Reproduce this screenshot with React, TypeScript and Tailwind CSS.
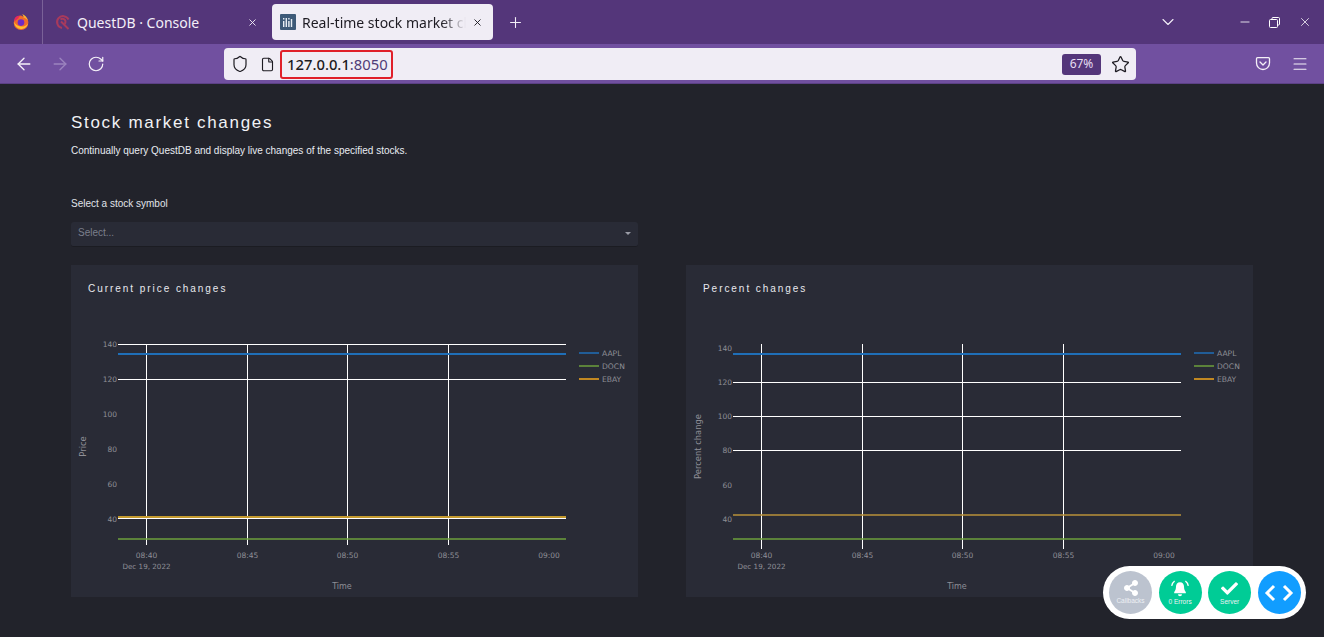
import React from 'react';
import { ArrowLeft, ArrowRight, ChevronDown, File, Menu, Minus, Plus, RotateCw, Shield, Star, X } from 'lucide-react';
import { FaCheck, FaShareAlt } from 'react-icons/fa';

interface ChartProps {
  title: string;
  yLabel: string;
  yTicks: { label: string; y: number; line?: boolean }[];
  vEnd: number;
  series: { color: string; y: number; width?: number }[];
  whiteLines?: number[];
}

const LEGEND = [
  { name: 'AAPL', color: '#1f6fb8', y: 88 },
  { name: 'DOCN', color: '#6da03c', y: 101 },
  { name: 'EBAY', color: '#f5a81c', y: 114 },
];

const XS = [75.5, 176.5, 276.5, 377.5];
const TIMES = ['08:40', '08:45', '08:50', '08:55'];
const TICK = '#8f8f96';

const Chart: React.FC<ChartProps> = ({ title, yLabel, yTicks, vEnd, series, whiteLines = [] }) => {
  return (
    <div className="bg-[#292b36] h-[332px] flex flex-col">
      <h3 className="pl-[17px] pt-[17px] text-[10px] leading-[13px] tracking-[1.95px] text-[#e8e9ee]">{title}</h3>
      <svg width="567" height="302" viewBox="0 30 567 302" className="block font-['DejaVu_Sans',sans-serif]">
        {yTicks.filter((t) => t.line).map((t) => (
          <line key={t.label} x1="47" x2="495" y1={t.y + 0.5} y2={t.y + 0.5} stroke="#fff" strokeWidth="1" />
        ))}
        {whiteLines.map((y) => (
          <line key={y} x1="47" x2="495" y1={y} y2={y} stroke="#fff" strokeWidth="1" />
        ))}
        {XS.map((x) => (
          <line key={x} x1={x} x2={x} y1="79" y2={vEnd} stroke="#fff" strokeWidth="1" />
        ))}
        {series.map((s) => (
          <line key={s.color} x1="47" x2="495" y1={s.y} y2={s.y} stroke={s.color} strokeWidth={s.width ?? 2} />
        ))}
        {yTicks.map((t) => (
          <text key={t.label} x="46" y={t.y + 2.5} textAnchor="end" fontSize="7.5" fill={TICK}>{t.label}</text>
        ))}
        {XS.map((x, i) => (
          <text key={x} x={x} y="292.5" textAnchor="middle" fontSize="7.5" fill={TICK}>{TIMES[i]}</text>
        ))}
        <text x="478" y="292.5" textAnchor="middle" fontSize="7.5" fill={TICK}>09:00</text>
        <text x={XS[0]} y="303.5" textAnchor="middle" fontSize="7.2" fill={TICK}>Dec 19, 2022</text>
        <text x="271" y="324" textAnchor="middle" fontSize="8" fill={TICK}>Time</text>
        <text transform="translate(15 181.5) rotate(-90)" textAnchor="middle" fontSize="8.4" fill={TICK}>{yLabel}</text>
        {LEGEND.map((l) => (
          <g key={l.name}>
            <line x1="508" x2="528" y1={l.y} y2={l.y} stroke={l.color} strokeWidth="1.5" />
            <text x="531" y={l.y + 3} fontSize="7.6" fill={TICK}>{l.name}</text>
          </g>
        ))}
      </svg>
    </div>
  );
};

const FirefoxLogo = () => (
  <svg width="18" height="18" viewBox="0 0 18 18">
    <path d="M9 2.5a7.3 7.3 0 1 0 7.3 7.3c0-1.6-.5-3.100-1.400-4.300L9 2.500Z" fill="#f26a2a" />
    <path d="M2.500 5.800C3.500 3.500 6 2.200 8 3c-1 .7-1.500 1.500-1.500 2.300L2.500 8.500Z" fill="#e6295f" />
    <path d="M10 1c2.800 1.200 5.500 3.500 6 6.800-1-1.800-2.700-3-4.500-3.400C11.700 3.300 11 2 10 1Z" fill="#ffb32c" />
    <circle cx="9" cy="9.6" r="3.3" fill="#6f2bc4" />
    <path d="M2 9c.6 4 3.500 7 7 7 3.300 0 6-2.200 7-5.500-1.500 2.200-3.800 3.200-6 3.100C6.700 13.500 3.700 12 2 9Z" fill="#ffc02e" />
  </svg>
);

const QuestLogo = () => (
  <svg width="16" height="16" viewBox="0 0 16 16" fill="none" stroke="#a83a5c" strokeWidth="2">
    <path d="M13.500 5.500A6 6 0 1 0 7 14" />
    <path d="M5.500 5.500A3 3 0 1 1 9.500 10" />
    <path d="M6 7.500 13.500 15" />
  </svg>
);

const PlotIcon = () => (
  <svg width="16" height="16" viewBox="0 0 16 16">
    <rect width="16" height="16" rx="1" fill="#3e5a78" />
    <path d="M3 7h1.400v6H3zM5.600 4h1.400v9H5.600zM8.200 7h1.400v6H8.200zM10.800 5h1.400v8h-1.400z" fill="#e8eef4" />
    <path d="M3 4h1.400v1.400H3zM8.200 4h1.400v1.400H8.200z" fill="#e8eef4" />
  </svg>
);

const PocketIcon = () => (
  <svg width="16" height="16" viewBox="0 0 16 16" fill="none" stroke="#f5f1f8" strokeWidth="1.3" strokeLinecap="round" strokeLinejoin="round">
    <path d="M2.500 1.700h11c.6 0 1 .4 1 1V7a6.500 6.500 0 0 1-13 0V2.700c0-.6.400-1 1-1Z" />
    <path d="M5 6l3 3 3-3" />
  </svg>
);

const RestoreIcon = () => (
  <svg width="11" height="11" viewBox="0 0 11 11" fill="none" stroke="#fff" strokeWidth="1">
    <rect x=".5" y="2.5" width="8" height="8" rx="1" />
    <path d="M3 2.500V1.500a1 1 0 0 1 1-1h5.500a1 1 0 0 1 1 1V7a1 1 0 0 1-1 1h-1" />
  </svg>
);

const BellRings = () => (
  <svg width="20" height="17" viewBox="0 0 20 17">
    <path d="M10 2.200c-2.600 0-4 2-4 4.300 0 2.700-.7 4.300-1.800 5.500v1.200h11.600V12c-1.100-1.200-1.800-2.800-1.800-5.500 0-2.300-1.400-4.300-4-4.300Z" fill="#fff" />
    <path d="M8 14.200h4a2 2 0 0 1-4 0Z" fill="#fff" />
    <path d="M4.600 1C3 2.200 2 3.900 1.700 5.800M15.400 1c1.600 1.200 2.600 2.900 2.900 4.800" fill="none" stroke="#fff" strokeWidth="1.3" />
  </svg>
);

const DebugBubble: React.FC<{ color: string; label: string; children: React.ReactNode }> = ({ color, label, children }) => (
  <div className={`w-[43px] h-[43px] rounded-full flex flex-col items-center justify-center text-white ${color}`}>
    {children}
    <span className="text-[6.5px] leading-[8px] mt-[1px] text-[#eef0f4]">{label}</span>
  </div>
);

const App: React.FC = () => {
  const chart1Ticks = [
    { label: '140', y: 79, line: true },
    { label: '120', y: 114, line: true },
    { label: '100', y: 149 },
    { label: '80', y: 184 },
    { label: '60', y: 219 },
    { label: '40', y: 254 },
  ];
  const chart2Ticks = [
    { label: '140', y: 83 },
    { label: '120', y: 117, line: true },
    { label: '100', y: 151, line: true },
    { label: '80', y: 185, line: true },
    { label: '60', y: 220 },
    { label: '40', y: 254 },
  ];

  return (
    <div className="relative w-[1324px] h-[637px] overflow-hidden bg-[#22232b] font-['Liberation_Sans',sans-serif]">
      {/* Tab strip */}
      <div className="h-[44px] bg-[#54367a] flex items-center font-['Noto_Sans',sans-serif] text-white">
        <div className="w-[43px] h-[44px] flex items-center justify-center border-r border-[#7a6198]">
          <FirefoxLogo />
        </div>
        <div className="w-[229px] h-[36px] flex items-center pl-[12px] pr-[14px] gap-[6px]">
          <QuestLogo />
          <span className="flex-1 pt-[1px] text-[14px] text-[#f3eff8]">QuestDB · Console</span>
          <X size={11} className="text-[#f3eff8]" />
        </div>
        <div className="w-[221px] h-[36px] bg-[#f0edf5] rounded-[4px] flex items-center pl-[8px] pr-[10px] gap-[6px]">
          <PlotIcon />
          <span className="flex-1 pt-[1px] overflow-hidden whitespace-nowrap text-[14px] text-[#1d1b22] [mask-image:linear-gradient(to_right,black_85%,transparent)]">Real-time stock market changes</span>
          <X size={11} className="text-[#1d1b22]" />
        </div>
        <Plus size={17} strokeWidth={1.5} className="ml-[14px] text-[#f3eff8]" />
        <div className="flex-1" />
        <ChevronDown size={20} strokeWidth={1.3} className="mr-[60px] text-[#f3eff8]" />
        <Minus size={14} strokeWidth={1.4} className="mr-[17px] text-white" />
        <div className="mr-[18px]"><RestoreIcon /></div>
        <X size={14} strokeWidth={1.3} className="mr-[12px] text-white" />
      </div>

      {/* Toolbar */}
      <div className="h-[40px] pt-[1px] bg-[#7150a0] flex items-center border-b border-[#5c4186]">
        <ArrowLeft size={20} strokeWidth={1.6} className="ml-[14px] text-[#f5f1f8]" />
        <ArrowRight size={20} strokeWidth={1.6} className="ml-[16px] text-[#9c84bf]" />
        <RotateCw size={18} strokeWidth={1.6} className="ml-[17px] text-[#f5f1f8]" />
        <div className="ml-[119px] w-[912px] h-[32px] bg-[#f0edf5] rounded-[4px] flex items-center pl-[7px] pr-[6px] text-[#1d1b22]">
          <Shield size={18} strokeWidth={1.6} />
          <File size={15} strokeWidth={1.8} className="ml-[11px]" />
          <div className="ml-[5px] h-[29px] w-[113px] border-2 border-[#e0202a] rounded-[3px] flex items-center pl-[5px] text-[14.8px] font-['Noto_Sans',sans-serif]">
            <span className="font-medium">127.0.0.1</span>
            <span className="text-[#4f3c78]">:8050</span>
          </div>
          <div className="flex-1" />
          <div className="w-[39px] h-[21px] bg-[#54367a] rounded-[3px] flex items-center justify-center text-[12px] text-[#e6def2] font-['Noto_Sans',sans-serif]">67%</div>
          <Star size={19} strokeWidth={1.6} className="ml-[10px]" />
        </div>
        <div className="flex-1" />
        <div className="mr-[20px]"><PocketIcon /></div>
        <Menu size={18} strokeWidth={1.4} className="mr-[15px] text-[#f5f1f8]" />
      </div>

      {/* Page */}
      <div className="pl-[71px] pr-[71px] pt-[28px] text-[#e8e9ee]">
        <h1 className="text-[17px] leading-[22px] tracking-[1.7px] text-[#f1f2f5]">Stock market changes</h1>
        <p className="mt-[11px] text-[10px] leading-[12px] text-[#e8ecf2]">Continually query QuestDB and display live changes of the specified stocks.</p>

        <p className="mt-[41px] text-[10px] leading-[12px] text-[#e0e3ea]">Select a stock symbol</p>
        <div className="mt-[12px] w-[567px] h-[25px] bg-[#292b36] rounded-[3px] border-b border-[#1b1c22] flex items-center justify-between pl-[7px] pr-[7px] pb-[3px]">
          <span className="text-[10px] text-[#7b7f8c]">Select...</span>
          <span className="w-0 h-0 mt-[2px] border-x-[3px] border-x-transparent border-t-[3px] border-t-[#9a9ca6]" />
        </div>

        <div className="mt-[18px] grid grid-cols-[567px_567px] gap-[48px]">
          <Chart
            title="Current price changes"
            yLabel="Price"
            yTicks={chart1Ticks}
            vEnd={280}
            series={[
              { color: '#1f6fb8', y: 89 },
              { color: '#6da03c', y: 274, width: 1.5 },
              { color: '#c49a2e', y: 252 },
            ]}
            whiteLines={[253.5]}
          />
          <Chart
            title="Percent changes"
            yLabel="Percent change"
            yTicks={chart2Ticks}
            vEnd={284}
            series={[
              { color: '#1f6fb8', y: 89 },
              { color: '#6da03c', y: 274, width: 1.5 },
              { color: '#b8923a', y: 250, width: 1.5 },
            ]}
          />
        </div>
      </div>

      {/* Dash debug menu */}
      <div className="absolute left-[1103px] top-[566px] w-[203px] h-[53px] bg-white rounded-full flex items-center pl-[6px] gap-[6.6px]">
        <DebugBubble color="bg-[#bcc3cf]" label="Callbacks"><FaShareAlt size={16} /></DebugBubble>
        <DebugBubble color="bg-[#00cc96]" label="0 Errors"><BellRings /></DebugBubble>
        <DebugBubble color="bg-[#00cc96]" label="Server"><FaCheck size={17} /></DebugBubble>
        <div className="w-[43px] h-[43px] rounded-full bg-[#119dff] flex items-center justify-center text-white">
          <svg width="30" height="18" viewBox="0 0 30 18" fill="none" stroke="#fff" strokeWidth="3">
            <path d="M10 2 3 9l7 7" />
            <path d="M20 2l7 7-7 7" />
          </svg>
        </div>
      </div>
    </div>
  );
};

export default App;
